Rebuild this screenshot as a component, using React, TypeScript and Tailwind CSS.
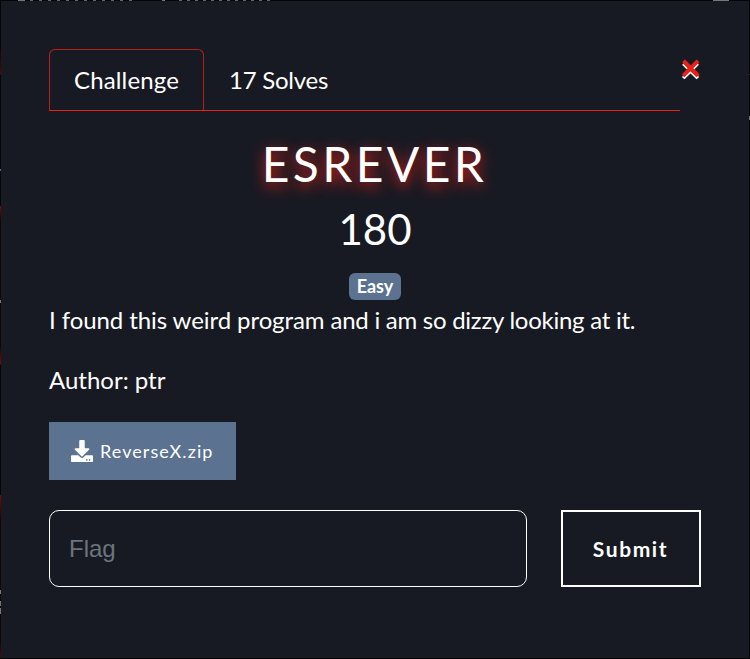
import { FaDownload } from "react-icons/fa";

function Header() {
  return (
    <header className="flex items-start">
      <div className="flex h-[62px] flex-1 border-b border-[#e62117] text-2xl leading-9">
        <button className="w-[155px] rounded-t-[6px] border border-b-0 border-[#b8201a] pb-px tracking-[0.15px]">Challenge</button>
        <button className="ml-[25px] pt-px tracking-[-0.25px]">17 Solves</button>
      </div>
      <button
        aria-label="Close"
        className="-mt-[5px] w-[21px] text-[36px] leading-[44px] font-bold text-[#e62117] [text-shadow:0_1px_0_#e62117,0_3px_0_#fff]"
      >
        ×
      </button>
    </header>
  );
}

function BackdropTop() {
  return (
    <div className="flex h-px gap-[5px] bg-[#050609] pr-[21px] pl-[18px]">
      <div className="w-[7px] bg-[#77777a]" />
      <div className="w-[105px] bg-[repeating-linear-gradient(90deg,#66666a_0_3px,#050609_3px_9px)]" />
      <div className="ml-[22px] w-[3px] bg-[#77777a]" />
      <div className="ml-[9px] w-[92px] bg-[repeating-linear-gradient(90deg,#66666a_0_3px,#050609_3px_8px)]" />
      <div className="ml-auto w-[16px] bg-[#77777a]" />
    </div>
  );
}

function Challenge() {
  return (
    <main className="flex-1 bg-[#181a23] px-12 pt-12">
      <Header />
      <h3 className="mt-[24px] pr-px text-center text-5xl leading-[58px] tracking-[3.4px] [text-shadow:0_4px_14px_#e62117]">
        ESREVER
      </h3>
      <h4 className="mt-[11px] text-center text-[42px] leading-[50px]">180</h4>
      <div className="mt-[19px] flex justify-center">
        <span className="flex h-[27px] w-[52px] items-center justify-center rounded-[6px] bg-[#5b7290] pb-px text-lg leading-none font-bold">Easy</span>
      </div>
      <p className="mt-[2px] text-2xl leading-9 tracking-[-0.08px]">
        I found this weird program <span className="tracking-[-0.26px]">and i am so dizzy looking at it.</span>
      </p>
      <p className="mt-6 text-2xl leading-9">Author: ptr</p>
      <a className="mt-6 flex h-[58px] w-[187px] items-center gap-[7px] bg-[#5b7290] pl-[22px] text-lg tracking-[1.08px]">
        <FaDownload className="size-[22px]" />
        ReverseX.zip
      </a>
      <div className="mt-[30px] flex h-[77px] gap-[34px]">
        <input
          placeholder="Flag"
          className="w-[478px] rounded-[10px] border border-white bg-transparent px-[19px] font-['Liberation_Sans',sans-serif] text-2xl placeholder:text-[#6c757d]"
        />
        <button className="flex-1 border-2 border-white pr-px text-[21px] font-bold tracking-[1.6px]">Submit</button>
      </div>
    </main>
  );
}

export default function App() {
  return (
    <div className="flex h-[659px] w-[750px] flex-col bg-[#050609] pb-px font-['Lato',sans-serif] text-white">
      <BackdropTop />
      <div className="flex flex-1">
        <div className="w-px bg-[linear-gradient(#050609_0_45px,#500606_72px,#800606_73px,#050609_74px_168px,#4d6f80_168px_170px,#050609_170px_205px,#800606_205px,#140507_220px_299px,#77777a_299px_302px,#140507_302px_345px,#800606_363px,#050609_364px_494px,#800606_494px,#140507_520px_589px,#77777a_589px_593px,#140507_593px_600px,#77777a_600px_605px,#140507_605px_607px,#77777a_607px_613px,#140507_613px_640px,#500606_657px)]" />
        <Challenge />
        <div className="w-px bg-[linear-gradient(#050609_0_73px,#800606_73px_74px,#050609_74px_115px,#77777a_115px_119px,#050609_119px)]" />
      </div>
    </div>
  );
}
